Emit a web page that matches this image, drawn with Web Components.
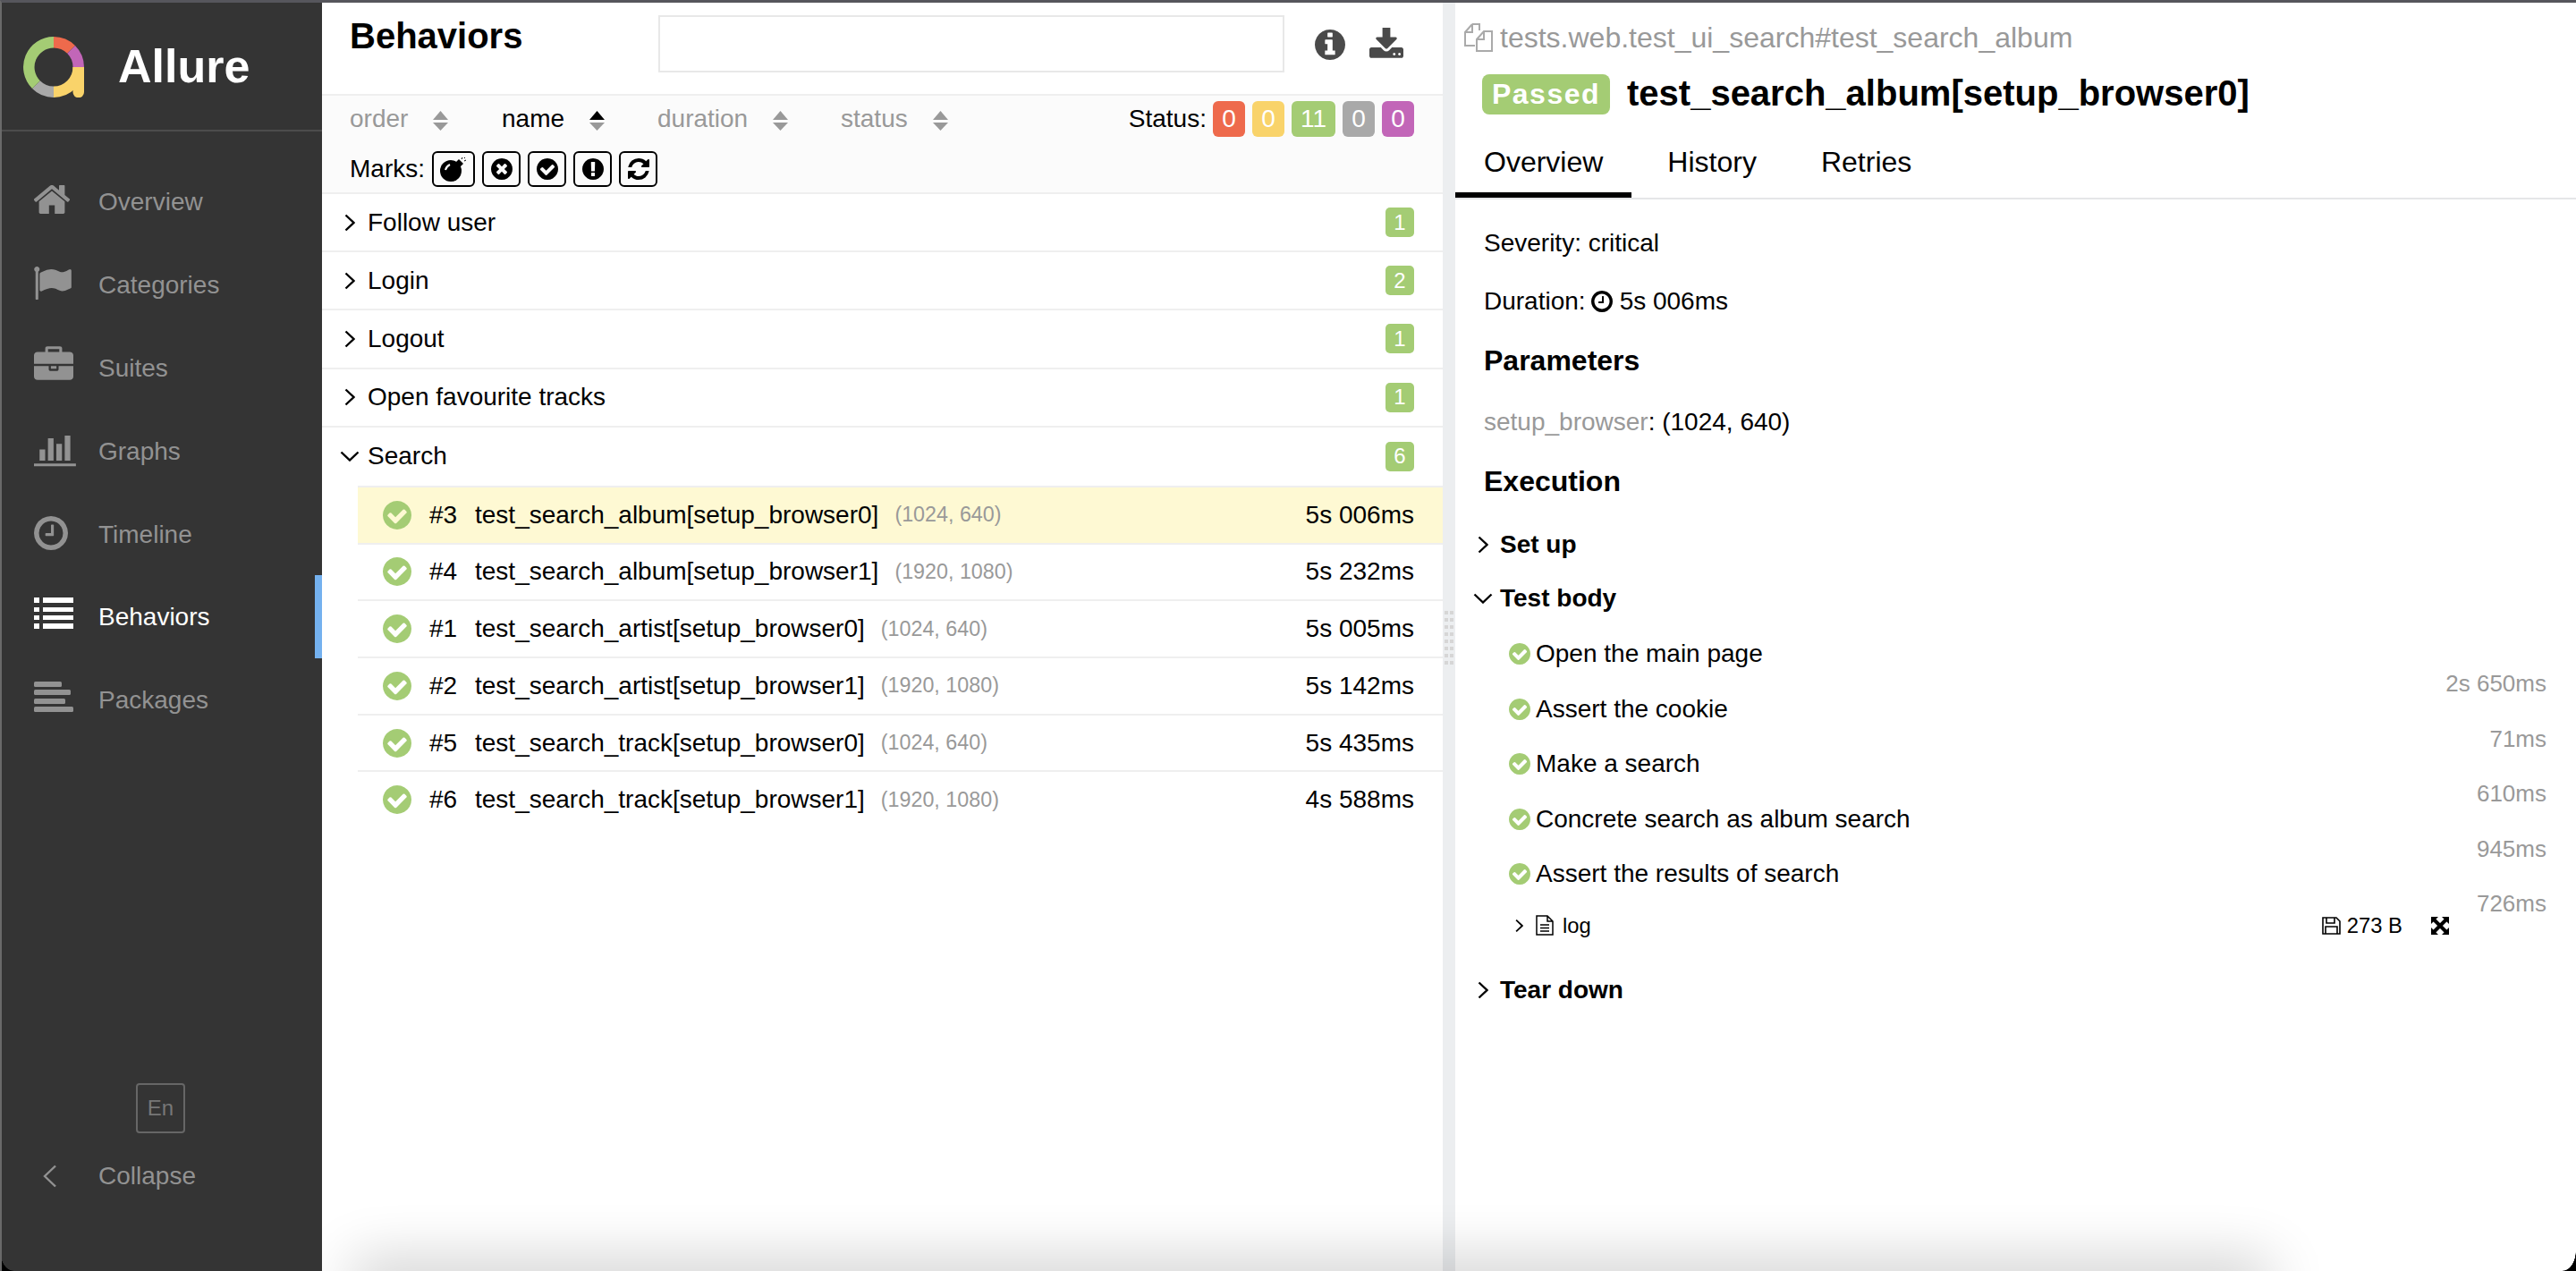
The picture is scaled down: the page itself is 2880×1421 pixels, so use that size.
<!DOCTYPE html>
<html lang="en">
<head>
<meta charset="utf-8">
<title>Allure Report</title>
<style>
html, body { margin: 0; height: 100%; background: #fff; }
body { font: 28px "Liberation Sans", Arial, sans-serif; color: #000; overflow: hidden; }
</style>
</head>
<body>
<allure-app>
  <side-bar slot="side">
    <nav-item icon="home" w="40" h="32" lift="5">Overview</nav-item>
    <nav-item icon="flag" w="42" h="37" lift="3">Categories</nav-item>
    <nav-item icon="briefcase" w="44" h="38" lift="10">Suites</nav-item>
    <nav-item icon="chart" w="50" h="39" lift="2">Graphs</nav-item>
    <nav-item icon="clock" w="38" h="38" lift="2">Timeline</nav-item>
    <nav-item icon="list" w="44" h="35" lift="8" active>Behaviors</nav-item>
    <nav-item icon="packages" w="44" h="34" lift="6">Packages</nav-item>
  </side-bar>

  <behaviors-pane slot="left">
    <tree-group>Follow user<span slot="count">1</span></tree-group>
    <tree-group>Login<span slot="count">2</span></tree-group>
    <tree-group>Logout<span slot="count">1</span></tree-group>
    <tree-group>Open favourite tracks<span slot="count">1</span></tree-group>
    <tree-group open>Search<span slot="count">6</span></tree-group>
    <test-row num="#3" params="(1024, 640)" time="5s 006ms" selected>test_search_album[setup_browser0]</test-row>
    <test-row num="#4" params="(1920, 1080)" time="5s 232ms">test_search_album[setup_browser1]</test-row>
    <test-row num="#1" params="(1024, 640)" time="5s 005ms">test_search_artist[setup_browser0]</test-row>
    <test-row num="#2" params="(1920, 1080)" time="5s 142ms">test_search_artist[setup_browser1]</test-row>
    <test-row num="#5" params="(1024, 640)" time="5s 435ms">test_search_track[setup_browser0]</test-row>
    <test-row num="#6" params="(1920, 1080)" time="4s 588ms">test_search_track[setup_browser1]</test-row>
  </behaviors-pane>

  <result-pane slot="right">
    <step-row time="2s 650ms">Open the main page</step-row>
    <step-row time="71ms">Assert the cookie</step-row>
    <step-row time="610ms">Make a search</step-row>
    <step-row time="945ms">Concrete search as album search</step-row>
    <step-row time="726ms">Assert the results of search</step-row>
  </result-pane>
</allure-app>

<script>
/**
 * Allure report page, built from web components.
 */

// Icon shapes, most of them Font Awesome 4 glyphs.
const ICONS = {
  home: ['96 256 1600 1280', '<path d="M1472 992v480q0 26-19 45t-45 19h-384v-384h-256v384h-384q-26 0-45-19t-19-45v-480q0-1 .5-3t.5-3l575-474 575 474q1 2 1 6zm223-69l-62 74q-8 9-21 11h-3q-13 0-21-7l-692-577-692 577q-12 8-24 7-13-2-21-11l-62-74q-8-10-7-23.500t11-21.500l719-599q32-26 76-26t76 26l244 204v-195q0-14 9-23t23-9h192q14 0 23 9t9 23v408l219 182q10 8 11 21.500t-7 23.500z"/>'],
  flag: ['64 128 1728 1536', '<path d="M320 256q0 72-64 110v1266q0 13-9.500 22.500t-22.500 9.500h-64q-13 0-22.500-9.500t-9.500-22.500v-1266q-64-38-64-110 0-53 37.500-90.500t90.500-37.500 90.500 37.500 37.500 90.500zm1472 64v763q0 25-12.500 38.500t-39.500 27.500q-215 116-369 116-61 0-123.500-22t-108.500-48-115.500-48-142.500-22q-192 0-464 146-17 9-33 9-26 0-45-19t-19-45v-742q0-32 31-55 21-14 79-43 236-120 421-120 107 0 200 29t219 88q38 19 88 19 54 0 117.500-21t110-47 88-47 54.500-21q26 0 45 19t19 45z"/>'],
  briefcase: ['0 0 1792 1536', '<path d="M640 256h512v-128h-512v128zm1152 640v480q0 66-47 113t-113 47h-1472q-66 0-113-47t-47-113v-480h672v160q0 26 19 45t45 19h320q26 0 45-19t19-45v-160h672zm-768 0v128h-256v-128h256zm768-480v384h-1792v-384q0-66 47-113t113-47h352v-160q0-40 28-68t68-28h576q40 0 68 28t28 68v160h352q66 0 113 47t47 113z"/>'],
  chart: ['0 128 2048 1536', '<path d="M512 896v512h-256v-512h256zm384-512v1024h-256v-1024h256zm1024 1152v128h-2048v-1536h128v1408h1920zm-640-896v768h-256v-768h256zm384-384v1152h-256v-1152h256z"/>'],
  clock: ['128 128 1536 1536', '<path d="M1024 544v448q0 14-9 23t-23 9h-320q-14 0-23-9t-9-23v-64q0-14 9-23t23-9h224v-352q0-14 9-23t23-9h64q14 0 23 9t9 23zm416 352q0-148-73-273t-198-198-273-73-273 73-198 198-73 273 73 273 198 198 273 73 273-73 198-198 73-273zm224 0q0 209-103 385.500t-279.500 279.500-385.500 103-385.500-103-279.500-279.500-103-385.500 103-385.500 279.500-279.500 385.500-103 385.500 103 279.500 279.500 103 385.500z"/>'],
  list: ['0 0 44 35', '<path d="M0 0h6v6H0zM10 0h34v6H10zM0 11h6v5H0zM10 11h34v5H10zM0 20h6v5H0zM10 20h34v5H10zM0 29h6v6H0zM10 29h34v6H10z"/>'],
  packages: ['0 0 44 34', '<rect width="31" height="6" rx="1.500"/><rect y="9" width="41" height="6" rx="1.500"/><rect y="19" width="35" height="6" rx="1.500"/><rect y="28" width="44" height="6" rx="1.500"/>'],
  check: ['128 128 1536 1536', '<path d="M1412 734q0-28-18-46l-91-90q-19-19-45-19t-45 19l-408 407-226-226q-19-19-45-19t-45 19l-91 90q-18 18-18 46 0 27 18 45l362 362q19 19 45 19 27 0 46-19l543-543q18-18 18-45zm252 162q0 209-103 385.500t-279.500 279.500-385.500 103-385.500-103-279.500-279.500-103-385.500 103-385.500 279.500-279.500 385.500-103 385.500 103 279.500 279.500 103 385.500z"/>'],
  times: ['128 128 1536 1536', '<path d="M1277 1122q0-26-19-45l-181-181 181-181q19-19 19-45 0-27-19-46l-90-90q-19-19-46-19-26 0-45 19l-181 181-181-181q-19-19-45-19-27 0-46 19l-90 90q-19 19-19 46 0 26 19 45l181 181-181 181q-19 19-19 45 0 27 19 46l90 90q19 19 46 19 26 0 45-19l181-181 181 181q19 19 45 19 27 0 46-19l90-90q19-19 19-46zm387-226q0 209-103 385.500t-279.500 279.500-385.500 103-385.500-103-279.500-279.500-103-385.500 103-385.500 279.500-279.500 385.500-103 385.500 103 279.500 279.500 103 385.500z"/>'],
  exclaim: ['128 128 1536 1536', '<path d="M896 128q209 0 385.500 103t279.500 279.500 103 385.500-103 385.500-279.500 279.500-385.500 103-385.500-103-279.500-279.500-103-385.500 103-385.500 279.500-279.500 385.500-103zm128 1247v-190q0-14-9-23.500t-22-9.500h-192q-13 0-23 10t-10 23v190q0 13 10 23t23 10h192q13 0 22-9.500t9-23.500zm-2-344l18-621q0-12-10-18-10-8-24-8h-220q-14 0-24 8-10 6-10 18l17 621q0 10 10 17.500t24 7.500h185q14 0 23.500-7.500t10.500-17.500z"/>'],
  info: ['128 128 1536 1536', '<path d="M1152 1376v-160q0-14-9-23t-23-9h-96v-512q0-14-9-23t-23-9h-320q-14 0-23 9t-9 23v160q0 14 9 23t23 9h96v320h-96q-14 0-23 9t-9 23v160q0 14 9 23t23 9h448q14 0 23-9t9-23zm-128-896v-160q0-14-9-23t-23-9h-192q-14 0-23 9t-9 23v160q0 14 9 23t23 9h192q14 0 23-9t9-23zm640 416q0 209-103 385.500t-279.500 279.500-385.500 103-385.500-103-279.500-279.500-103-385.500 103-385.500 279.500-279.500 385.500-103 385.500 103 279.500 279.500 103 385.500z"/>'],
  download: ['64 64 1664 1472', '<path d="M1344 1344q0-26-19-45t-45-19-45 19-19 45 19 45 45 19 45-19 19-45zm256 0q0-26-19-45t-45-19-45 19-19 45 19 45 45 19 45-19 19-45zm128-224v320q0 40-28 68t-68 28h-1472q-40 0-68-28t-28-68v-320q0-40 28-68t68-28h465l135 136q58 56 136 56t136-56l136-136h464q40 0 68 28t28 68zm-325-569q17 41-14 70l-448 448q-18 19-45 19t-45-19l-448-448q-31-29-14-70 17-39 59-39h256v-448q0-26 19-45t45-19h256q26 0 45 19t19 45v448h256q42 0 59 39z"/>'],
  refresh: ['128 128 1536 1536', '<path d="M1639 1056q0 5-1 7-64 268-268 434.500t-478 166.500q-146 0-282.500-55t-243.500-157l-129 129q-19 19-45 19t-45-19-19-45v-448q0-26 19-45t45-19h448q26 0 45 19t19 45-19 45l-137 137q71 66 161 102t187 36q134 0 250-65t186-179q11-17 53-117 8-23 30-23h192q13 0 22.500 9.500t9.500 22.500zm25-800v448q0 26-19 45t-45 19h-448q-26 0-45-19t-19-45 19-45l138-138q-148-137-349-137-134 0-250 65t-186 179q-11 17-53 117-8 23-30 23h-199q-13 0-22.500-9.500t-9.500-22.500v-7q65-268 270-434.500t480-166.500q146 0 284 55.500t245 156.500l130-129q19-19 45-19t45 19 19 45z"/>'],
  bomb: ['0 0 30 28', '<circle cx="12" cy="16" r="12"/><path d="M17 7l4-4 5 5-4 4z"/><path d="M6 15q1-4 5-6" fill="none" stroke="#fff" stroke-width="2"/><path d="M24 3l1-2M27 5l2-1M27 2l1-1" fill="none" stroke="#000" stroke-width="1"/>'],
  right: ['0 0 12 20', '<path d="M1.500 1.500L10.500 10 1.500 18.500" fill="none" stroke="currentColor" stroke-width="2.400"/>'],
  down: ['0 0 22 12', '<path d="M1.500 1.500L11 10.500 20.500 1.500" fill="none" stroke="currentColor" stroke-width="2.400"/>'],
  left: ['0 0 18 26', '<path d="M15 1.500L3 13 15 24.500" fill="none" stroke="currentColor" stroke-width="2.400"/>'],
  copy: ['0 0 32 32', '<g fill="none" stroke="currentColor" stroke-width="2"><path d="M9 1H17V8M9 1L1 10V25H12M9 1V10H1"/><path d="M22 9H31V31H14V18ZM22 9V18H14"/></g>'],
  doc: ['0 0 20 23', '<path d="M1 1H13L19 7V22H1ZM13 1V7H19M5 11H15M5 14.500H15M5 18H15" fill="none" stroke="currentColor" stroke-width="1.500"/>'],
  floppy: ['0 0 21 20', '<path d="M1 1H16L20 5V19H1ZM5 1V7H14V1M4 19V11H17V19" fill="none" stroke="currentColor" stroke-width="1.600"/>'],
  expand: ['0 0 20 20', '<path d="M0 0H8L0 8ZM20 0V8L12 0ZM0 20V12L8 20ZM20 20H12L20 12Z"/><path d="M3 3L17 17M17 3L3 17" fill="none" stroke="currentColor" stroke-width="4"/>']
}

customElements.define('a-icon',
  /**
   * One inline SVG icon, coloured by the inherited text colour.
   */
  class extends HTMLElement {
    connectedCallback () {
      const [box, shape] = ICONS[this.getAttribute('name')]
      const w = this.getAttribute('w')
      const h = this.getAttribute('h') || w
      this.attachShadow({ mode: 'open' }).innerHTML = `
<style>
:host { display: inline-flex; flex: none; width: ${w}px; height: ${h}px; }
svg { display: block; width: 100%; height: 100%; fill: currentColor; }
</style>
<svg viewBox="${box}" xmlns="http://www.w3.org/2000/svg">${shape}</svg>`
    }
  }
)

customElements.define('allure-app',
  /**
   * The page frame: sidebar, two panes and the splitter between them.
   */
  class extends HTMLElement {
    constructor () {
      super()
      this.attachShadow({ mode: 'open' }).innerHTML = `
<style>
:host { display: flex; position: relative; box-sizing: border-box; height: 100vh; overflow: hidden;
  border-top: 3px solid #56565c; border-left: 2px solid #6a6a6a; }
.split { flex: none; width: 14px; background: #eceef0; display: flex; align-items: center; justify-content: center; }
.grip { width: 10px; height: 64px; margin-top: 6px;
  background: repeating-linear-gradient(to bottom, #d6d6d6 0 4px, transparent 4px 8px); position: relative; }
.grip::after { content: ""; position: absolute; left: 4px; top: 0; bottom: 0; width: 2px; background: #eceef0; }
.shadow { position: absolute; left: 358px; right: 0; bottom: 0; height: 110px; overflow: hidden; pointer-events: none; }
.shadow i { position: absolute; left: 46px; width: 2120px; bottom: -30px; height: 30px;
  box-shadow: 0 0 64px 12px rgba(0, 0, 0, .2); }
.corner { position: absolute; bottom: 0; width: 15px; height: 23px; pointer-events: none; }
.cl { left: -2px; background: radial-gradient(ellipse 15px 23px at 100% 0, transparent 97%, #000 100%); }
.cr { right: 0; background: radial-gradient(ellipse 15px 23px at 0 0, transparent 97%, #000 100%); }
</style>
<slot name="side"></slot>
<slot name="left"></slot>
<div class="split"><div class="grip"></div></div>
<slot name="right"></slot>
<div class="shadow"><i></i></div>
<div class="corner cl"></div>
<div class="corner cr"></div>`
    }
  }
)

customElements.define('side-bar',
  /**
   * The dark navigation column.
   */
  class extends HTMLElement {
    constructor () {
      super()
      this.attachShadow({ mode: 'open' }).innerHTML = `
<style>
:host { display: flex; flex-direction: column; flex: none; width: 358px; background: #343434; color: #929292; }
.brand { height: 142px; border-bottom: 2px solid #4c4c4c; display: flex; align-items: center; padding-left: 24px; box-sizing: content-box; }
.brand svg { width: 68px; height: 68px; flex: none; margin-top: 2px; }
.brand span { margin-left: 38px; font-size: 52px; font-weight: 700; color: #fff; }
nav { padding-top: 32px; }
.foot { margin-top: auto; display: flex; flex-direction: column; padding-bottom: 59px; }
.lang { align-self: center; box-sizing: border-box; width: 55px; height: 56px; border: 2px solid #666; border-radius: 4px;
  display: flex; align-items: center; justify-content: center; font-size: 24px; color: #777; margin-right: 3px; }
.collapse { display: flex; align-items: center; height: 95px; padding-left: 45px; }
.collapse span { margin-left: 45px; }
</style>
<div class="brand">
  <svg viewBox="0 0 68 68" xmlns="http://www.w3.org/2000/svg">
    <g fill="none" stroke-width="12.500">
      <path d="M34 6.250A27.750 27.750 0 0 1 53.600 14.400" stroke="#ee6a4c"/>
      <path d="M53.600 14.400A27.750 27.750 0 0 1 61.750 34" stroke="#c266b8"/>
      <path d="M61.750 34A27.750 27.750 0 0 1 34 61.750" stroke="#f9d36a"/>
      <path d="M34 61.750A27.750 27.750 0 0 1 14.400 53.600" stroke="#a9a9a9"/>
      <path d="M14.400 53.600A27.750 27.750 0 0 1 34 6.250" stroke="#a4cc74"/>
    </g>
    <path d="M55.500 34H68V62a6.250 6.250 0 0 1-12.500 0Z" fill="#f9d36a"/>
  </svg>
  <span>Allure</span>
</div>
<nav><slot></slot></nav>
<div class="foot">
  <div class="lang">En</div>
  <div class="collapse"><a-icon name="left" w="18" h="26"></a-icon><span>Collapse</span></div>
</div>`
    }
  }
)

customElements.define('nav-item',
  /**
   * One sidebar link. The lift attribute raises the icon a little off centre.
   */
  class extends HTMLElement {
    connectedCallback () {
      const icon = `<a-icon name="${this.getAttribute('icon')}" w="${this.getAttribute('w')}" h="${this.getAttribute('h')}"></a-icon>`
      this.attachShadow({ mode: 'open' }).innerHTML = `
<style>
:host { display: flex; align-items: center; box-sizing: border-box; height: 92.8px; padding-left: 36px; }
:host([active]) { color: #fff; border-right: 8px solid #74b1ef; }
.ico { width: 72px; display: flex; padding-bottom: ${this.getAttribute('lift') || 0}px; }
.label { padding-top: 2px; }
</style>
<div class="ico">${icon}</div><div class="label"><slot></slot></div>`
    }
  }
)

customElements.define('status-pill',
  /**
   * A small coloured counter.
   */
  class extends HTMLElement {
    constructor () {
      super()
      this.attachShadow({ mode: 'open' }).innerHTML = `
<style>
:host { display: inline-flex; align-items: center; justify-content: center; box-sizing: border-box; height: 40px;
  min-width: 36px; padding: 0 10px; border-radius: 6px; color: #fff; font-size: 28px; background: var(--pill, #a4cc74); }
</style>
<slot></slot>`
    }
  }
)

customElements.define('sort-item',
  /**
   * A sort column label with its up and down arrows.
   */
  class extends HTMLElement {
    constructor () {
      super()
      this.attachShadow({ mode: 'open' }).innerHTML = `
<style>
:host { display: flex; align-items: center; color: #999; }
:host([active]) { color: #000; }
svg { width: 17px; height: 22px; margin-left: 28px; margin-top: 3px; flex: none; }
.up { fill: #999; }
:host([active]) .up { fill: #000; }
.dn { fill: #999; }
</style>
<slot></slot>
<svg viewBox="0 0 17 22" xmlns="http://www.w3.org/2000/svg"><path class="up" d="M8.500 0L17 10H0Z"/><path class="dn" d="M0 13H17L8.500 22Z"/></svg>`
    }
  }
)

customElements.define('mark-button',
  /**
   * An outlined toggle that holds one icon.
   */
  class extends HTMLElement {
    constructor () {
      super()
      this.attachShadow({ mode: 'open' }).innerHTML = `
<style>
:host { display: flex; align-items: center; justify-content: center; box-sizing: border-box; height: 40px; width: 43px;
  border: 2px solid #000; border-radius: 6px; margin-left: 8px; }
</style>
<slot></slot>`
    }
  }
)

customElements.define('behaviors-pane',
  /**
   * The middle pane: title, search, sort bar and the tree.
   */
  class extends HTMLElement {
    constructor () {
      super()
      this.attachShadow({ mode: 'open' }).innerHTML = `
<style>
:host { display: block; flex: none; width: 1253px; background: #fff; }
header { display: flex; align-items: flex-start; box-sizing: border-box; height: 102px; padding-left: 31px; }
h2 { margin: 14px 0 0; width: 345px; font-size: 40px; line-height: 46px; font-weight: 700; }
input { display: block; box-sizing: border-box; width: 700px; height: 64px; margin: 14px 34px 0 0; border: 2px solid #e8e8e8; background: #fff; outline: 0; }
.info { margin-top: 30px; color: #4a4a4a; margin-right: 27px; }
.dl { margin-top: 28px; color: #4a4a4a; }
.bar { box-sizing: border-box; height: 112px; padding: 0 32px 0 31px; background: #fbfbfb;
  border-top: 2px solid #efefef; border-bottom: 2px solid #efefef; }
.row { display: flex; align-items: center; height: 52px; }
.c1 { width: 170px; } .c2 { width: 174px; } .c3 { width: 205px; }
.status { margin-left: auto; display: flex; align-items: center; gap: 8px; }
.status span { margin-right: -1px; }
.marks { display: flex; align-items: center; margin-top: 10px; height: 40px; }
.bomb { width: 48px; }
</style>
<header>
  <h2>Behaviors</h2>
  <input type="text" aria-label="Search">
  <a-icon class="info" name="info" w="34"></a-icon>
  <a-icon class="dl" name="download" w="38" h="34"></a-icon>
</header>
<div class="bar">
  <div class="row">
    <sort-item class="c1">order</sort-item>
    <sort-item class="c2" active>name</sort-item>
    <sort-item class="c3">duration</sort-item>
    <sort-item>status</sort-item>
    <div class="status">
      <span>Status:</span>
      <status-pill style="--pill:#ee6a4c">0</status-pill>
      <status-pill style="--pill:#f9d36a">0</status-pill>
      <status-pill style="--pill:#a4cc74">11</status-pill>
      <status-pill style="--pill:#a9a9a9">0</status-pill>
      <status-pill style="--pill:#c266b8">0</status-pill>
    </div>
  </div>
  <div class="marks">
    <span>Marks:</span>
    <mark-button class="bomb"><a-icon name="bomb" w="30" h="28"></a-icon></mark-button>
    <mark-button><a-icon name="times" w="24"></a-icon></mark-button>
    <mark-button><a-icon name="check" w="24"></a-icon></mark-button>
    <mark-button><a-icon name="exclaim" w="24"></a-icon></mark-button>
    <mark-button><a-icon name="refresh" w="24"></a-icon></mark-button>
  </div>
</div>
<slot></slot>`
    }
  }
)

customElements.define('tree-group',
  /**
   * A tree node with a chevron and its child count.
   */
  class extends HTMLElement {
    connectedCallback () {
      const open = this.hasAttribute('open')
      this.attachShadow({ mode: 'open' }).innerHTML = `
<style>
:host { display: flex; align-items: center; box-sizing: border-box; height: 65.2px; padding: 0 32px 0 19px; border-bottom: 2px solid #efefef; }
:host([open]) { border-bottom: 0; }
.chev { width: 24px; display: flex; justify-content: center; margin-right: 8px; }
.text { flex: 1; }
.count { display: flex; align-items: center; justify-content: center; width: 32px; height: 33px; border-radius: 5px;
  background: #a4cc74; color: #fff; font-size: 24px; }
</style>
<div class="chev">${open ? '<a-icon name="down" w="22" h="12"></a-icon>' : '<a-icon name="right" w="12" h="20"></a-icon>'}</div>
<div class="text"><slot></slot></div>
<div class="count"><slot name="count"></slot></div>`
    }
  }
)

customElements.define('test-row',
  /**
   * One test case in the tree.
   */
  class extends HTMLElement {
    connectedCallback () {
      this.attachShadow({ mode: 'open' }).innerHTML = `
<style>
:host { display: flex; align-items: center; box-sizing: border-box; height: 63.7px; margin-left: 40px; padding: 0 32px 0 28px;
  border-top: 2px solid #efefef; }
:host([selected]) { background: #fef9d3; }
a-icon { color: #a4cc74; margin-right: 20px; }
.num { width: 51px; }
.params { margin-left: 18px; font-size: 23.300px; color: #999; }
.time { margin-left: auto; }
</style>
<a-icon name="check" w="32"></a-icon>
<div class="num">${this.getAttribute('num')}</div>
<slot></slot>
<div class="params">${this.getAttribute('params')}</div>
<div class="time">${this.getAttribute('time')}</div>`
    }
  }
)

customElements.define('step-row',
  /**
   * One execution step. The duration hangs below its row, as in the report.
   */
  class extends HTMLElement {
    connectedCallback () {
      this.attachShadow({ mode: 'open' }).innerHTML = `
<style>
:host { display: flex; align-items: center; height: 61.500px; padding: 0 33px 0 60px; }
a-icon { color: #a4cc74; margin-right: 6px; }
.time { margin-left: auto; margin-top: 67px; font-size: 26px; color: #999; }
</style>
<a-icon name="check" w="24"></a-icon>
<slot></slot>
<div class="time">${this.getAttribute('time')}</div>`
    }
  }
)

customElements.define('result-pane',
  /**
   * The right pane with the details of the selected test.
   */
  class extends HTMLElement {
    constructor () {
      super()
      this.attachShadow({ mode: 'open' }).innerHTML = `
<style>
:host { display: block; flex: 1; min-width: 0; background: #fff; }
.path { display: flex; align-items: center; height: 38px; margin-top: 20px; padding-left: 10px; color: #999; font-size: 32px; }
.path a-icon { color: #aaa; margin-right: 8px; }
.title { display: flex; align-items: center; height: 45px; margin-top: 22px; padding-left: 30px; }
.passed { display: flex; align-items: center; justify-content: center; width: 143px; height: 45px; border-radius: 8px;
  background: #a4cc74; color: #fff; font-size: 32px; font-weight: 700; letter-spacing: 1.500px; }
h2 { margin: -2px 0 0 19px; font-size: 40px; font-weight: 700; }
.tabs { display: flex; height: 80px; margin-top: 13px; box-sizing: content-box; border-bottom: 2px solid #e5e6e8; font-size: 32px; }
.tab { display: flex; align-items: center; box-sizing: border-box; padding: 6px 32px 0; margin-right: 8px; border-bottom: 6px solid transparent; }
.tab.on { border-bottom-color: #000; margin-right: 8px; }
.body { padding-left: 32px; }
.line { display: flex; align-items: center; height: 65px; white-space: pre; }
.line a-icon { margin: 0 8px 0 6px; }
h3 { display: flex; align-items: center; margin: 0; font-size: 32px; font-weight: 700; }
.h1 { height: 68px; } .h2 { height: 62px; }
.muted { color: #999; }
.sec { display: flex; align-items: center; height: 60px; font-weight: 700; }
.sec .ch { width: 30px; display: flex; justify-content: center; margin: 0 4px 0 -16px; }
.log { display: flex; align-items: center; height: 53px; padding: 0 0 0 67px; font-size: 23.800px; }
.log .r { margin-right: 14px; }
.log .d { margin-right: 10px; }
.log .sz { margin-left: auto; display: flex; align-items: center; }
.log .sz a-icon { margin-right: 7px; }
.log .ex { margin: 0 142px 0 32px; }
.tear { margin-top: 16px; }
.exec { margin-bottom: 1.500px; }
</style>
<div class="path"><a-icon name="copy" w="32"></a-icon>tests.web.test_ui_search#test_search_album</div>
<div class="title"><div class="passed">Passed</div><h2>test_search_album[setup_browser0]</h2></div>
<div class="tabs">
  <div class="tab on">Overview</div>
  <div class="tab">History</div>
  <div class="tab">Retries</div>
</div>
<div class="body exec">
  <div class="line" style="margin-top:16px">Severity: critical</div>
  <div class="line">Duration:<a-icon name="clock" w="24"></a-icon>5s 006ms</div>
  <h3 class="h1">Parameters</h3>
  <div class="line" style="height:70px"><span class="muted">setup_browser</span>: (1024, 640)</div>
  <h3 class="h2">Execution</h3>
  <div class="sec" style="margin-top:10px"><div class="ch"><a-icon name="right" w="12" h="20"></a-icon></div>Set up</div>
  <div class="sec"><div class="ch"><a-icon name="down" w="22" h="12"></a-icon></div>Test body</div>
</div>
<slot></slot>
<div class="log">
  <a-icon class="r" name="right" w="9" h="16"></a-icon>
  <a-icon class="d" name="doc" w="20" h="23"></a-icon>log
  <span class="sz"><a-icon name="floppy" w="21" h="20"></a-icon>273 B</span>
  <a-icon class="ex" name="expand" w="20"></a-icon>
</div>
<div class="body"><div class="sec tear"><div class="ch"><a-icon name="right" w="12" h="20"></a-icon></div>Tear down</div></div>`
    }
  }
)
</script>
</body>
</html>
